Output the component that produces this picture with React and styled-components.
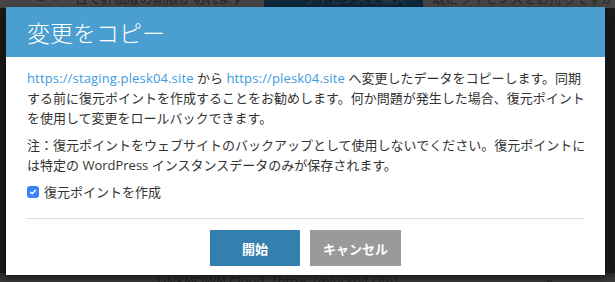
import React from "react";
import styled, { createGlobalStyle } from "styled-components";

const GlobalStyle = createGlobalStyle`
  html, body {
    margin: 0;
    padding: 0;
    background: #161616;
    overflow: hidden;
  }
  body {
    font-family: "Open Sans", "Noto Sans CJK JP", sans-serif;
  }
`;

const Page = styled.div`
  position: relative;
  width: 615px;
  height: 282px;
  display: flex;
  flex-direction: column;
  background: #1a1a1a;
  overflow: hidden;
`;

const TopBar = styled.div`
  height: 8px;
  flex: none;
  display: flex;
  align-items: flex-end;
  background: #474747;
  color: #232323;
  font-size: 13px;
  line-height: 20px;
  white-space: nowrap;
`;

const Days = styled.span`
  font-size: 26px;
  line-height: 34px;
  margin-left: 33px;
  margin-right: 12px;
  color: #262626;
`;

const BuyButton = styled.span`
  display: flex;
  align-items: flex-end;
  gap: 8px;
  height: 30px;
  margin-left: 20px;
  padding: 0 16px 0 12px;
  background: #0f2839;
  color: #2d3f4b;
`;

const HaveLicense = styled.span`
  margin-left: 10px;
  color: #262626;
`;

const Content = styled.div`
  flex: 1;
  display: flex;
  flex-direction: column;
  justify-content: flex-end;
`;

const Row = styled.div`
  height: 9px;
  background: linear-gradient(#2a2a2a, #3a3a3a);
  display: flex;
  align-items: flex-start;
  padding-left: 157px;
  color: #1e1e1e;
  font-size: 13px;
  line-height: 16px;
  white-space: nowrap;
  overflow: hidden;
  gap: 140px;
`;

const Modal = styled.div`
  position: absolute;
  left: 6px;
  top: 7px;
  width: 599px;
  background: #fff;
  box-shadow: 0 3px 9px rgba(0, 0, 0, 0.5);
`;

const Header = styled.div`
  height: 50px;
  display: flex;
  align-items: center;
  padding: 0 21px;
  background: #4a9ed0;
  color: #fff;
  font-size: 23px;
  font-family: "Noto Sans CJK JP", sans-serif;
  font-weight: 300;
`;

const Body = styled.div`
  padding: 11px 18px 0 21px;
  color: #333;
  font-size: 13px;
  line-height: 20px;
`;

const Para = styled.p`
  margin: 0 0 ${(p) => p.$gap || 9}px;
`;

const Link = styled.a`
  color: #3d9be0;
  text-decoration: none;
  letter-spacing: 0.15px;
`;

const CheckRow = styled.label`
  display: flex;
  align-items: center;
  gap: 5px;
  height: 20px;
`;

const Box = styled.span`
  width: 12px;
  height: 12px;
  border-radius: 3px;
  background: #3b82f6;
  display: flex;
  align-items: center;
  justify-content: center;
`;

const Footer = styled.div`
  margin: 16px 20px 0;
  border-top: 1px solid #ddd;
  padding: 11px 0 9px;
  display: flex;
  justify-content: center;
  gap: 10px;
`;

const Button = styled.button`
  width: ${(p) => p.$w}px;
  height: 36px;
  border: none;
  border-radius: 0;
  background: ${(p) => (p.$primary ? "#357fae" : "#9a9a9a")};
  color: #fff;
  font-family: "Noto Sans CJK JP", sans-serif;
  font-weight: 700;
  font-size: 13px;
`;

export default function App() {
  return (
    <>
      <GlobalStyle />
      <Page>
        <TopBar>
          <Days>01</Days>
          <span>日で評価版の期限が切れます</span>
          <BuyButton>
            <span>⟷</span>
            <span>ライセンスを購入</span>
          </BuyButton>
          <HaveLicense>既にライセンスをお持ちですか？</HaveLicense>
        </TopBar>
        <Content>
          <Row>
            <span>UNKNOWN Cloud（https://plesk04.site）</span>
            <span>⌕</span>
          </Row>
        </Content>
        <Modal>
          <Header>変更をコピー</Header>
          <Body>
            <Para $gap={7}>
              <Link>https://staging.plesk04.site</Link> から{" "}
              <Link>https://plesk04.site</Link>{" "}
              へ変更したデータをコピーします。同期する前に復元ポイントを作成することをお勧めします。何か問題が発生した場合、復元ポイントを使用して変更をロールバックできます。
            </Para>
            <Para $gap={7}>
              注：復元ポイントをウェブサイトのバックアップとして使用しないでください。復元ポイントには特定の
              WordPress インスタンスデータのみが保存されます。
            </Para>
            <CheckRow>
              <Box>
                <svg width="8" height="8" viewBox="0 0 8 8">
                  <path d="M1.5 4.2 L3.2 5.8 L6.5 2.2" fill="none" stroke="#fff" strokeWidth="1.4" strokeLinecap="round" strokeLinejoin="round" />
                </svg>
              </Box>
              <span>復元ポイントを作成</span>
            </CheckRow>
          </Body>
          <Footer>
            <Button $primary $w={90}>開始</Button>
            <Button $w={91}>キャンセル</Button>
          </Footer>
        </Modal>
      </Page>
    </>
  );
}
